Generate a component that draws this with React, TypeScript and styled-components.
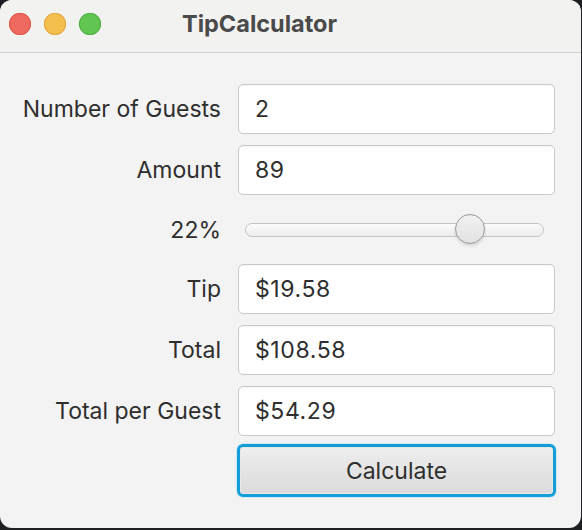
import React from "react";
import styled, { createGlobalStyle } from "styled-components";

const Global = createGlobalStyle`
  html, body { margin: 0; padding: 0; background: #1e1f22; }
  body { width: 582px; height: 530px; overflow: hidden; font-family: Inter, "Noto Sans", sans-serif; }
`;

const Window = styled.div`
  width: 581px;
  height: 528px;
  background: #f3f3f3;
  border-radius: 12px;
  overflow: hidden;
  display: flex;
  flex-direction: column;
`;

const TitleBar = styled.div`
  height: 53px;
  box-sizing: border-box;
  border-bottom: 1.5px solid #d2d2d2;
  background: #f2f2f1;
  display: flex;
  align-items: center;
  position: relative;
  padding-left: 9px;
  gap: 13px;
`;

const Light = styled.span<{ $c: string; $b: string }>`
  width: 22px;
  height: 22px;
  border-radius: 50%;
  background: ${(p) => p.$c};
  box-shadow: inset 0 0 0 0.8px ${(p) => p.$b};
  margin-top: -4px;
`;

const Title = styled.div`
  position: absolute;
  left: 182px;
  top: 9px;
  font-weight: 700;
  font-size: 23.5px;
  color: #4a4a4a;
`;

const Form = styled.div`
  display: grid;
  grid-template-columns: 199px 317px;
  justify-content: start;
  column-gap: 17px;
  row-gap: 11px;
  padding: 31px 0 0 22px;
  align-items: center;
`;

const Label = styled.div`
  text-align: right;
  font-size: 23px;
  color: #2e2e2e;
  white-space: nowrap;
`;

const Field = styled.div`
  height: 50px;
  box-sizing: border-box;
  border: 1.5px solid #c9c9c9;
  border-radius: 5px;
  background: #fff;
  box-shadow: inset 0 1px 1px rgba(0, 0, 0, 0.04);
  display: flex;
  align-items: center;
  padding-left: 16px;
  font-size: 23px;
  letter-spacing: 0.6px;
  color: #2e2e2e;
`;

const SliderRow = styled.div`
  height: 47px;
  position: relative;
  display: flex;
  align-items: center;
  padding: 0 11px 0 7px;
`;

const Track = styled.div`
  flex: 1;
  height: 14px;
  box-sizing: border-box;
  border: 1.5px solid #c4c4c4;
  border-radius: 7px;
  background: linear-gradient(#fbfbfb, #ececec);
`;

const Thumb = styled.div`
  position: absolute;
  top: 8px;
  width: 30px;
  height: 30px;
  box-sizing: border-box;
  border-radius: 50%;
  border: 1.5px solid #979797;
  background: linear-gradient(#f2f2f2, #e2e2e2);
  box-shadow: 0 2px 3px rgba(0, 0, 0, 0.12);
`;

const Empty = styled.div``;

const Button = styled.button`
  height: 53px;
  box-sizing: border-box;
  border: 3px solid #139ed8;
  border-radius: 6px;
  background: linear-gradient(#efefef, #dadada);
  box-shadow: 0 0 0 1px #cfe9f5, inset 0 0 0 1px #e8e8e8;
  font-family: inherit;
  font-size: 23px;
  color: #2e2e2e;
  margin-top: -3px;
  margin-left: -1px;
  width: 319px;
`;

const rows: [string, string][] = [
  ["Tip", "$19.58"],
  ["Total", "$108.58"],
  ["Total per Guest", "$54.29"],
];

export default function App() {
  const pct = 0.75;
  return (
    <>
      <Global />
      <Window>
        <TitleBar>
          <Light $c="#ee6a5f" $b="#d9534a" />
          <Light $c="#f5bf4f" $b="#dea236" />
          <Light $c="#61c554" $b="#4ead42" />
          <Title>TipCalculator</Title>
        </TitleBar>
        <Form>
          <Label>Number of Guests</Label>
          <Field>2</Field>
          <Label>Amount</Label>
          <Field>89</Field>
          <Label>22%</Label>
          <SliderRow>
            <Track />
            <Thumb style={{ left: `${7 + pct * 280}px` }} />
          </SliderRow>
          {rows.map(([l, v]) => (
            <React.Fragment key={l}>
              <Label>{l}</Label>
              <Field>{v}</Field>
            </React.Fragment>
          ))}
          <Empty />
          <Button>Calculate</Button>
        </Form>
      </Window>
    </>
  );
}
